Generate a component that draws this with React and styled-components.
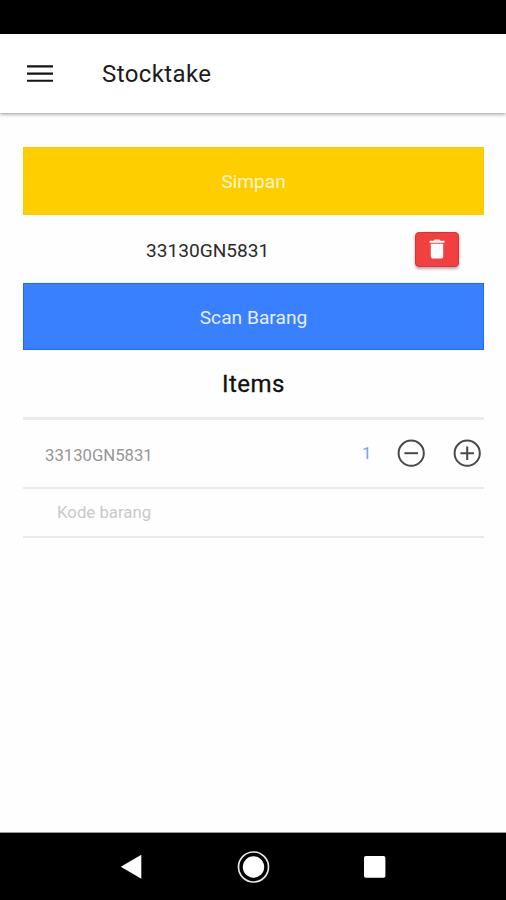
import styled, { createGlobalStyle } from 'styled-components'

const GlobalStyle = createGlobalStyle`
  * {
    box-sizing: border-box;
  }

  body {
    margin: 0;
    background: #fefefe;
    font-family: Roboto, sans-serif;
  }

  button {
    border: 0;
    padding: 0;
    background: none;
    font: inherit;
  }
`

const Screen = styled.div`
  display: flex;
  flex-direction: column;
  height: 900px;
  overflow: hidden;
`

const StatusBar = styled.div`
  height: 34px;
  background: #000;
`

const Header = styled.header`
  display: flex;
  align-items: center;
  height: 79px;
  padding: 0 26px;
  background: #fff;
  box-shadow: 0 1px 4px rgba(0, 0, 0, 0.42);
`

const MenuButton = styled.button`
  display: flex;
  width: 28px;
  height: 28px;
`

const Title = styled.h1`
  margin: 0 0 0 48px;
  font-size: 24px;
  font-weight: 400;
  letter-spacing: 0.4px;
  line-height: 28px;
  color: #1c1c1c;
`

const Main = styled.main`
  flex: 1;
  padding: 34px 22px 0 23px;
`

const BlockButton = styled.button`
  display: block;
  width: 100%;
  height: ${(p) => p.$height}px;
  padding-top: 1px;
  border: 1px solid ${(p) => p.$edge};
  background: ${(p) => p.$color};
  font-size: 19.2px;
  letter-spacing: ${(p) => p.$spacing}px;
  color: ${(p) => p.$fg};
`

const ScannedRow = styled.div`
  display: flex;
  align-items: center;
  height: 68px;
  padding-right: 25px;
`

const ScannedCode = styled.span`
  flex: 1;
  padding-left: 123px;
  padding-top: 3px;
  font-size: 19.1px;
  line-height: 24px;
  color: #2b2b2b;
`

const DeleteButton = styled.button`
  display: grid;
  place-items: center;
  width: 44px;
  height: 35px;
  border: 1px solid #ea2b35;
  border-radius: 4px;
  background: #f23f40;
  box-shadow: 0 2px 3px rgba(0, 0, 0, 0.32);
`

const Heading = styled.h2`
  height: 67px;
  margin: 0;
  padding-top: 1px;
  font-size: 24px;
  font-weight: 400;
  letter-spacing: 0.5px;
  line-height: 67px;
  text-align: center;
  color: #111;
  -webkit-text-stroke: 0.3px #111;
`

const ItemRow = styled.div`
  display: flex;
  align-items: center;
  height: 72px;
  padding: 0 3px 0 22px;
  border-top: 3px solid #ececec;
  border-bottom: 2px solid #e9e9e9;
`

const ItemCode = styled.span`
  flex: 1;
  padding-top: 3px;
  font-size: 16.7px;
  color: #969696;
`

const Quantity = styled.span`
  width: 35px;
  padding-bottom: 2px;
  font-size: 17px;
  color: #7d9bfa;
`

const StepButton = styled.button`
  display: flex;
  width: 28px;
  height: 28px;
  margin-bottom: 2px;

  & + & {
    margin-left: 28px;
  }
`

const CodeInput = styled.input`
  display: block;
  width: 100%;
  height: 49px;
  padding: 0 0 1px 34px;
  border: 0;
  border-bottom: 2px solid #e9e9e9;
  background: none;
  font-family: inherit;
  font-size: 16.8px;

  &::placeholder {
    color: #c9c9c9;
    opacity: 1;
  }
`

const NavBar = styled.nav`
  display: flex;
  align-items: center;
  justify-content: space-between;
  height: 68px;
  padding: 0 120px;
  border-top: 1px solid #999;
  background: #000;
`

const MenuIcon = () => (
  <svg width="28" height="28" viewBox="0 0 28 28">
    <path d="M1 6.4h26M1 13.6h26M1 20.7h26" stroke="#141414" strokeWidth="2.1" />
  </svg>
)

const TrashIcon = () => (
  <svg width="16" height="20" viewBox="0 0 16 20" fill="#fff">
    <path d="M0.5 1.8H4.6L5.7 0.6H10.3L11.4 1.8H15.5V3.8H0.5z" />
    <path d="M1.8 4.8H14.2V17.5a1.9 1.9 0 0 1-1.9 1.9H3.7a1.9 1.9 0 0 1-1.9-1.9z" />
  </svg>
)

const StepIcon = ({ plus }) => (
  <svg width="28" height="28" viewBox="0 0 28 28" fill="none" stroke="#484848" strokeWidth="2">
    <circle cx="14.2" cy="14.2" r="12.6" />
    <path d={plus ? 'M7.4 14.2h13.6M14.2 7.4v13.6' : 'M7.4 14.2h13.6'} />
  </svg>
)

const BackIcon = () => (
  <svg width="22" height="26" viewBox="0 0 22 26">
    <path d="M0.8 12.7L21.3 0.7v24z" fill="#fff" />
  </svg>
)

const HomeIcon = () => (
  <svg width="34" height="34" viewBox="0 0 34 34">
    <circle cx="17.5" cy="17" r="15" fill="none" stroke="#e8e8e8" strokeWidth="1.7" />
    <circle cx="17.5" cy="17" r="10.7" fill="#fff" />
  </svg>
)

const RecentIcon = () => (
  <svg width="22" height="22" viewBox="0 0 22 22">
    <rect width="21.4" height="21.8" rx="1.8" fill="#fff" />
  </svg>
)

export default function App() {
  return (
    <Screen>
      <GlobalStyle />
      <StatusBar />
      <Header>
        <MenuButton aria-label="Menu">
          <MenuIcon />
        </MenuButton>
        <Title>Stocktake</Title>
      </Header>
      <Main>
        <BlockButton $height={68} $color="#ffce00" $edge="#fbc908" $fg="#fff6cf" $spacing={0}>
          Simpan
        </BlockButton>
        <ScannedRow>
          <ScannedCode>33130GN5831</ScannedCode>
          <DeleteButton aria-label="Hapus">
            <TrashIcon />
          </DeleteButton>
        </ScannedRow>
        <BlockButton $height={67} $color="#3880ff" $edge="#1a6cf6" $fg="#e6efff" $spacing={0}>
          Scan Barang
        </BlockButton>
        <Heading>Items</Heading>
        <ItemRow>
          <ItemCode>33130GN5831</ItemCode>
          <Quantity>1</Quantity>
          <StepButton aria-label="Kurangi">
            <StepIcon />
          </StepButton>
          <StepButton aria-label="Tambah">
            <StepIcon plus />
          </StepButton>
        </ItemRow>
        <CodeInput placeholder="Kode barang" />
      </Main>
      <NavBar>
        <BackIcon />
        <HomeIcon />
        <RecentIcon />
      </NavBar>
    </Screen>
  )
}
